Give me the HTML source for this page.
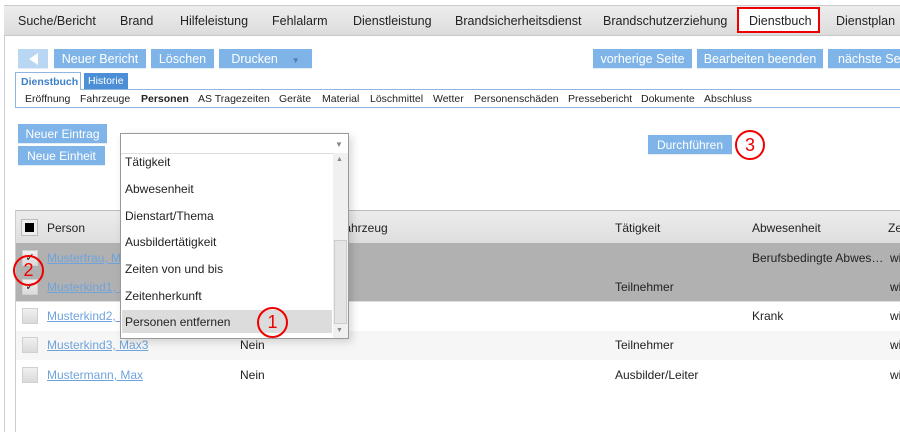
<!DOCTYPE html>
<html><head><meta charset="utf-8"><style>
*{margin:0;padding:0;box-sizing:border-box}
body{width:900px;height:432px;overflow:hidden;background:#fff;font-family:"Liberation Sans",sans-serif;position:relative;color:#222}
.a{position:absolute;white-space:nowrap}
.nav{left:4px;top:5px;width:896px;height:31px;background:linear-gradient(#ededed,#dcdcdc);border-top:1px solid #ccc;border-bottom:1px solid #c8c8c8}
.ni{font-size:12.5px;top:14px}
.btn{background:#7fb4e8;color:#fff;font-size:12.5px;text-align:center;line-height:20px;height:20px;border-bottom:1px solid #e3ecf5}
.sb{font-size:10.5px;top:93px}
.circ{border:2px solid #e00;border-radius:50%;color:#e00;text-align:center;font-size:18px}
.cb{width:16px;height:16px;background:linear-gradient(#f0f0f0,#dadada);border:1px solid #d0d0d0}
.lk{color:#6fa3dc;text-decoration:underline;font-size:12px}
.tx{font-size:12px}
.dd{font-size:12px;left:125px}
</style></head><body>
<div class="a" style="left:4px;top:36px;width:1px;height:396px;background:#ccc"></div>
<div class="a nav"></div>
<div class="a ni" style="left:18px">Suche/Bericht</div>
<div class="a ni" style="left:120px">Brand</div>
<div class="a ni" style="left:180px">Hilfeleistung</div>
<div class="a ni" style="left:272px">Fehlalarm</div>
<div class="a ni" style="left:353px">Dienstleistung</div>
<div class="a ni" style="left:455px">Brandsicherheitsdienst</div>
<div class="a ni" style="left:603px">Brandschutzerziehung</div>
<div class="a" style="left:737px;top:7px;width:83px;height:26px;background:#fff;border:2px solid #e00"></div>
<div class="a ni" style="left:749px">Dienstbuch</div>
<div class="a ni" style="left:836px">Dienstplan</div>

<div class="a btn" style="left:18px;top:49px;width:30px;background:#b9d6f2"><span style="display:inline-block;width:0;height:0;border-top:6px solid transparent;border-bottom:6px solid transparent;border-right:9px solid #fff;margin-top:4px"></span></div>
<div class="a btn" style="left:54px;top:49px;width:92px">Neuer Bericht</div>
<div class="a btn" style="left:151px;top:49px;width:63px">Löschen</div>
<div class="a btn" style="left:219px;top:49px;width:93px">Drucken &nbsp;&nbsp;&nbsp;<span style="font-size:8px;color:#4d7fb5">▼</span></div>
<div class="a btn" style="left:593px;top:49px;width:99px">vorherige Seite</div>
<div class="a btn" style="left:697px;top:49px;width:126px">Bearbeiten beenden</div>
<div class="a btn" style="left:828px;top:49px;width:80px;text-align:left;padding-left:10px">nächste Seite</div>

<div class="a" style="left:15px;top:89px;width:885px;height:19px;border:1px solid #8fb5e0;border-right:none"></div>
<div class="a" style="left:15px;top:72px;width:66px;height:18px;background:#fff;border:1px solid #8fb5e0;border-bottom:none;color:#3d7fc8;font-weight:bold;font-size:10.5px;padding:3px 0 0 5px">Dienstbuch</div>
<div class="a" style="left:84px;top:73px;width:44px;height:16px;background:#4d8fd6;color:#fff;font-size:10.5px;padding:2px 0 0 4px">Historie</div>
<div class="a sb" style="left:25px">Eröffnung</div>
<div class="a sb" style="left:80px">Fahrzeuge</div>
<div class="a sb" style="left:141px;font-weight:bold">Personen</div>
<div class="a sb" style="left:198px">AS Tragezeiten</div>
<div class="a sb" style="left:279px">Geräte</div>
<div class="a sb" style="left:322px">Material</div>
<div class="a sb" style="left:370px">Löschmittel</div>
<div class="a sb" style="left:433px">Wetter</div>
<div class="a sb" style="left:474px">Personenschäden</div>
<div class="a sb" style="left:568px">Pressebericht</div>
<div class="a sb" style="left:641px">Dokumente</div>
<div class="a sb" style="left:704px">Abschluss</div>

<div class="a btn" style="left:18px;top:124px;width:89px;font-size:12px">Neuer Eintrag</div>
<div class="a btn" style="left:18px;top:146px;width:87px;font-size:12px">Neue Einheit</div>
<div class="a btn" style="left:648px;top:135px;width:84px;font-size:12px">Durchführen</div>
<div class="a circ" style="left:735px;top:130px;width:30px;height:30px;line-height:26px">3</div>

<!-- table -->
<div class="a" style="left:15px;top:210px;width:1px;height:222px;background:#ccc"></div>
<div class="a" style="left:16px;top:210px;width:884px;height:33px;background:linear-gradient(#ececec,#dedede);border-top:1px solid #bbb"></div>
<div class="a cb" style="left:21px;top:219px;width:17px;height:17px;background:#eee;border:1px solid #bbb"><div style="width:9px;height:9px;background:#000;margin:3px"></div></div>
<div class="a tx" style="left:47px;top:221px;font-size:12px">Person</div>
<div class="a tx" style="left:337px;top:221px">Fahrzeug</div>
<div class="a tx" style="left:615px;top:221px">Tätigkeit</div>
<div class="a tx" style="left:752px;top:221px">Abwesenheit</div>
<div class="a tx" style="left:888px;top:221px">Ze</div>
<div class="a" style="left:16px;top:243px;width:884px;height:59px;background:#b1b1b1;border-bottom:1px solid #ddd"></div>
<div class="a" style="left:16px;top:331px;width:884px;height:29px;background:#f6f6f6"></div>
<div class="a cb" style="left:22px;top:250px;font-size:11px;line-height:14px;text-align:center">✓</div>
<div class="a cb" style="left:22px;top:279px;font-size:11px;line-height:14px;text-align:center">✓</div>
<div class="a cb" style="left:22px;top:308px"></div>
<div class="a cb" style="left:22px;top:337px"></div>
<div class="a cb" style="left:22px;top:367px"></div>
<div class="a lk" style="left:47px;top:251px">Musterfrau, Maxi</div>
<div class="a lk" style="left:47px;top:280px">Musterkind1, Max1</div>
<div class="a lk" style="left:47px;top:309px">Musterkind2, Max2</div>
<div class="a lk" style="left:47px;top:338px">Musterkind3, Max3</div>
<div class="a lk" style="left:47px;top:368px">Mustermann, Max</div>
<div class="a tx" style="left:240px;top:338px">Nein</div>
<div class="a tx" style="left:240px;top:368px">Nein</div>
<div class="a tx" style="left:752px;top:251px">Berufsbedingte Abwes…</div>
<div class="a tx" style="left:615px;top:280px">Teilnehmer</div>
<div class="a tx" style="left:752px;top:309px">Krank</div>
<div class="a tx" style="left:615px;top:338px">Teilnehmer</div>
<div class="a tx" style="left:615px;top:368px">Ausbilder/Leiter</div>
<div class="a tx" style="left:890px;top:251px">wi</div>
<div class="a tx" style="left:890px;top:280px">wi</div>
<div class="a tx" style="left:890px;top:309px">wi</div>
<div class="a tx" style="left:890px;top:338px">wi</div>
<div class="a tx" style="left:890px;top:368px">wi</div>
<div class="a circ" style="left:13px;top:255px;width:31px;height:31px;line-height:27px">2</div>

<!-- dropdown -->
<div class="a" style="left:120px;top:133px;width:229px;height:206px;background:#fff;border:1px solid #999;box-shadow:3px 3px 8px rgba(0,0,0,.15)"></div>
<div class="a" style="left:121px;top:153px;width:227px;height:1px;background:#ddd"></div>
<div class="a" style="left:335px;top:140px;font-size:8px;color:#888">▼</div>
<div class="a" style="left:333px;top:153px;width:15px;height:185px;background:#f0f0f0"></div>
<div class="a" style="left:334px;top:240px;width:13px;height:84px;background:#e4e4e4;border:1px solid #ccc"></div>
<div class="a" style="left:336px;top:156px;font-size:7px;color:#888">▲</div>
<div class="a" style="left:336px;top:327px;font-size:7px;color:#888">▼</div>
<div class="a" style="left:122px;top:310px;width:210px;height:23px;background:#dcdcdc"></div>
<div class="a dd" style="top:155px">Tätigkeit</div>
<div class="a dd" style="top:182px">Abwesenheit</div>
<div class="a dd" style="top:209px">Dienstart/Thema</div>
<div class="a dd" style="top:235px">Ausbildertätigkeit</div>
<div class="a dd" style="top:262px">Zeiten von und bis</div>
<div class="a dd" style="top:289px">Zeitenherkunft</div>
<div class="a dd" style="top:315px">Personen entfernen</div>
<div class="a circ" style="left:257px;top:307px;width:31px;height:31px;line-height:27px">1</div>
</body></html>
